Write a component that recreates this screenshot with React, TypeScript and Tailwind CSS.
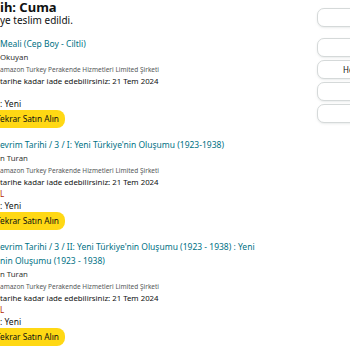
import { ReactNode } from "react";

const items = [
    {
        title: ["Meali (Cep Boy - Ciltli)"],
        author: "Okuyan",
        price: "",
    },
    {
        title: ["evrim Tarihi / 3 / I: Yeni Türkiye'nin Oluşumu (1923-1938)"],
        author: "n Turan",
        price: "L",
    },
    {
        title: ["evrim Tarihi / 3 / II: Yeni Türkiye'nin Oluşumu (1923 - 1938) : Yeni", "nin Oluşumu (1923 - 1938)"],
        author: "n Turan",
        price: "L",
    },
];

const sideButtons = ["Ürün desteği alın", "İade et", "Hediye makbuzu paylaşın", "Ürünü değerlendir", "Ürün yorumu yazın"];

function Line({ children, className }: { children: ReactNode; className?: string }) {
    return <div className={"whitespace-nowrap " + (className || "")}>{children}</div>;
}

export default function App() {
    return (
        <div
            className="flex w-[350px] h-[350px] overflow-hidden bg-white text-[#0f1111]"
            style={{ fontFamily: "'Noto Sans', 'Open Sans', sans-serif" }}
        >
            {/* Left column, cut off on the left */}
            <div className="w-[317px] shrink-0">
                <Line className="text-[13px] font-bold leading-[14px]">ih: Cuma</Line>
                <Line className="text-[10px] leading-[14px] -mt-[1px]">ye teslim edildi.</Line>

                {items.map((item, idx) => (
                    <div key={idx} className="mt-[10px]">
                        {item.title.map((t, i) => (
                            <Line key={i} className="text-[8.5px] leading-[14px] text-[#007185]">{t}</Line>
                        ))}
                        <Line className="text-[7.8px] leading-[13px] text-[#333]">{item.author}</Line>
                        <Line className="text-[6.5px] leading-[11px] text-[#565959]">
                            amazon Turkey Perakende Hizmetleri Limited Şirketi
                        </Line>
                        <Line className="text-[7.8px] leading-[12px]">tarihe kadar iade edebilirsiniz: 21 Tem 2024</Line>
                        {item.price ? (
                            <Line className="text-[8px] leading-[12px] text-[#b12704]">{item.price}</Line>
                        ) : (
                            <div className="h-[11px]" />
                        )}
                        <Line className="text-[8.5px] leading-[12px]">: Yeni</Line>
                        <button className="flex items-center -ml-[14px] rounded-[8px] bg-[#ffd814] pl-[10px] pr-[6px] h-[18px] text-[8.3px] text-[#0f1111] whitespace-nowrap">
                            Tekrar Satın Alın
                        </button>
                    </div>
                ))}
            </div>

            {/* Right column, cut off on the right */}
            <div className="w-[148px] shrink-0 pt-[8px] flex flex-col">
                {sideButtons.map((label, idx) => (
                    <div
                        key={idx}
                        className={
                            "h-[19px] shrink-0 rounded-[7px] border border-[#d5d9d9] bg-white shadow-[0_1px_2px_rgba(213,217,217,0.5)] flex items-center justify-center whitespace-nowrap text-[8px] text-[#0f1111] " +
                            (idx === 1 ? "mt-[11px]" : idx === 0 ? "" : "mt-[3px]")
                        }
                    >
                        {label}
                    </div>
                ))}
            </div>
        </div>
    );
}
